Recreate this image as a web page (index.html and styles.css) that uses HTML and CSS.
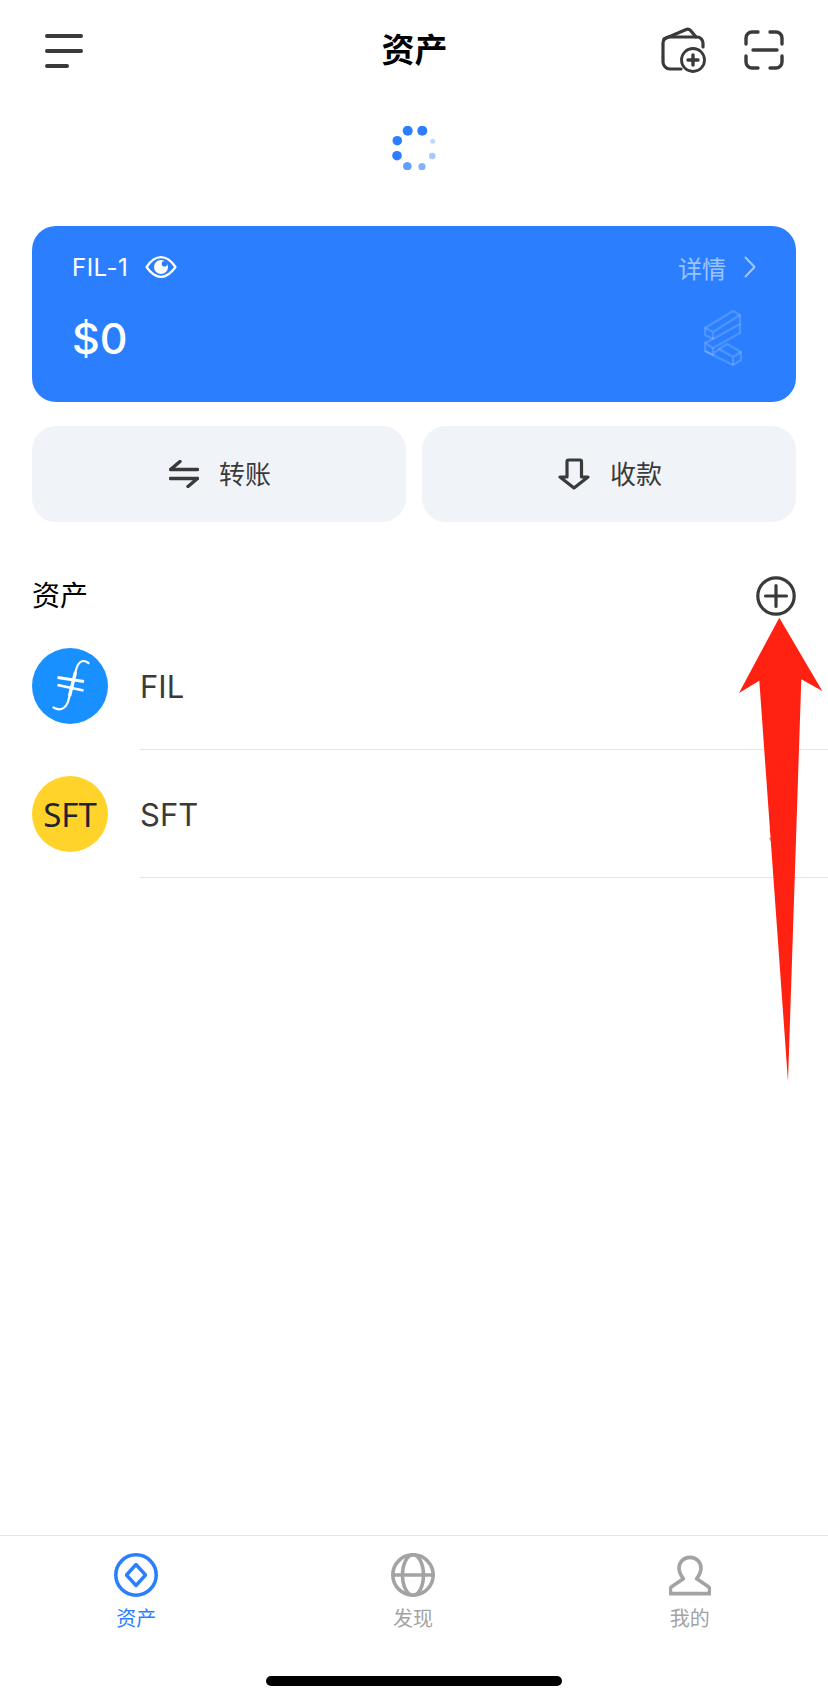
FILE: index.html
```html
<!DOCTYPE html>
<html lang="zh-CN">
<head>
    <meta charset="UTF-8">
    <meta name="viewport" content="width=device-width, initial-scale=1.0">
    <title>资产</title>
    <link rel="stylesheet" href="styles.css">
</head>
<body>
    <div class="page">
        <!-- 顶部导航 -->
        <header class="topbar">
            <div class="menu-btn">
                <span class="menu-line"></span>
                <span class="menu-line"></span>
                <span class="menu-line short"></span>
            </div>
            <h1 class="topbar-title">资产</h1>
            <div class="topbar-actions">
                <svg class="icon-wallet" width="46" height="46" viewBox="0 0 46 46" fill="none" stroke="#3a3a3a" stroke-width="3.2" stroke-linecap="round" stroke-linejoin="round">
                    <path d="M20 42H9a7 7 0 0 1-7-7V16a6 6 0 0 1 6-6H36a6 6 0 0 1 6 6v4"/>
                    <path d="M3 12L24 3q4-2 6 1l5 6"/>
                    <circle cx="32" cy="33" r="11.5" stroke-width="2.8"/>
                    <path d="M32 28v10M27 33h10" stroke-width="3.4"/>
                </svg>
                <svg width="40" height="40" viewBox="0 0 40 40" fill="none" stroke="#3a3a3a" stroke-width="3.4" stroke-linecap="round">
                    <path d="M14 2H8a6 6 0 0 0-6 6v6"/>
                    <path d="M26 2h6a6 6 0 0 1 6 6v6"/>
                    <path d="M14 38H8a6 6 0 0 1-6-6v-6"/>
                    <path d="M26 38h6a6 6 0 0 0 6-6v-6"/>
                    <path d="M9 20H33"/>
                </svg>
            </div>
        </header>

        <!-- 加载动画 -->
        <div class="spinner">
            <svg width="46" height="44" viewBox="391 126 46 44" fill="#2b7fff">
                <circle cx="407.7" cy="130.7" r="5"/>
                <circle cx="422.3" cy="130.7" r="5"/>
                <circle cx="432.7" cy="141.3" r="2.5" opacity="0.3"/>
                <circle cx="432.3" cy="156" r="3.3" opacity="0.42"/>
                <circle cx="422" cy="166.7" r="3.6" opacity="0.6"/>
                <circle cx="407.3" cy="166.3" r="4.3" opacity="0.75"/>
                <circle cx="397" cy="155.7" r="4.8"/>
                <circle cx="397.3" cy="140.7" r="4.8"/>
            </svg>
        </div>

        <main class="content">
            <!-- 钱包卡片 -->
            <section class="wallet-card">
                <div class="wallet-top">
                    <div class="wallet-name">
                        <span>FIL-1</span>
                        <svg width="32" height="22" viewBox="0 0 32 22">
                            <path d="M1.5 11C6 4.5 11 1.2 16 1.2S26 4.5 30.5 11C26 17.5 21 20.8 16 20.8S6 17.5 1.5 11Z" fill="none" stroke="#fff" stroke-width="2.2" stroke-linejoin="round"/>
                            <circle cx="16" cy="11" r="7" fill="#fff"/>
                            <circle cx="19.5" cy="7.8" r="2.8" fill="#2b7fff"/>
                        </svg>
                    </div>
                    <div class="wallet-detail">
                        <span>详情</span>
                        <svg width="12" height="22" viewBox="0 0 12 22" fill="none" stroke="#fff" stroke-opacity="0.55" stroke-width="2" stroke-linecap="round" stroke-linejoin="round">
                            <path d="M1.5 1.5L10.5 11L1.5 20.5"/>
                        </svg>
                    </div>
                </div>
                <div class="wallet-bottom">
                    <div class="wallet-balance">$0</div>
                    <svg class="wallet-mark" width="38" height="56" viewBox="10 10 38 56" fill="none" stroke="#fff" stroke-opacity="0.17" stroke-width="2.2" stroke-linejoin="round">
                        <path d="M11 28L39 11L46 15V24L19 39L11 35Z"/>
                        <path d="M11 28L19 32L46 15M19 32V39"/>
                        <path d="M46 24V33L19 48L11 43V51L39 65L47 60V52L33 44L25 49"/>
                        <path d="M11 43L19 39M19 48V55L11 51M39 65V57L47 52M39 57L25 49L19 54"/>
                    </svg>
                </div>
            </section>

            <!-- 转账 / 收款 -->
            <div class="actions">
                <div class="action-btn">
                    <svg width="30" height="28" viewBox="0 0 30 28" fill="none" stroke="#3a3a3a" stroke-width="3.4" stroke-linecap="round">
                        <path d="M1.5 9.5H28.5M1.5 9.5L11 1.5"/>
                        <path d="M1.5 18.5H28.5M28.5 18.5L19 26.5"/>
                    </svg>
                    <span class="action-label">转账</span>
                </div>
                <div class="action-btn">
                    <svg width="32" height="32" viewBox="0 0 32 32" fill="none" stroke="#3a3a3a" stroke-width="3.2" stroke-linejoin="round">
                        <path d="M9 19V3.5A1.5 1.5 0 0 1 10.5 2H22a1.5 1.5 0 0 1 1.5 1.5V19H30L16 30L2 19Z"/>
                    </svg>
                    <span class="action-label">收款</span>
                </div>
            </div>

            <div class="section-head">
                <h2 class="section-title">资产</h2>
                <svg width="40" height="40" viewBox="0 0 40 40" fill="none" stroke="#3a3a3a" stroke-width="3.2" stroke-linecap="round">
                    <circle cx="20" cy="20" r="18.2"/>
                    <path d="M20 9.5V30.5M9.5 20H30.5"/>
                </svg>
            </div>
        </main>

        <!-- 资产列表 -->
        <ul class="coin-list">
            <li class="coin-row">
                <svg class="coin-icon" width="76" height="76" viewBox="0 0 76 76" fill="none">
                    <circle cx="38" cy="38" r="38" fill="#1890ff"/>
                    <path d="M56.5 15C50.5 10.5 46 14 44 22L37 50C35 60 29 64 21.5 59.5" stroke="#fff" stroke-width="2.2" stroke-linecap="round"/>
                    <path d="M43.5 24L37.5 48" stroke="#fff" stroke-width="3.4"/>
                    <path d="M25.5 29.5L52 33.5M25.5 37L51.5 42.5" stroke="#fff" stroke-width="2.8"/>
                </svg>
                <div class="coin-body">
                    <span class="coin-name">FIL</span>
                    <div class="coin-amount">
                        <span class="coin-qty">0</span>
                        <span class="coin-fiat">$0</span>
                    </div>
                </div>
            </li>
            <li class="coin-row">
                <div class="coin-icon coin-sft">SFT</div>
                <div class="coin-body">
                    <span class="coin-name">SFT</span>
                    <div class="coin-amount">
                        <span class="coin-qty">0</span>
                        <span class="coin-fiat">$0</span>
                    </div>
                </div>
            </li>
        </ul>

        <!-- 底部标签栏 -->
        <footer class="tabbar-wrap">
            <nav class="tabbar">
                <div class="tab active">
                    <svg width="46" height="44" viewBox="0 0 46 44" fill="none" stroke="#2b7fff" stroke-width="3.6" stroke-linejoin="round">
                        <circle cx="23" cy="22" r="20.2"/>
                        <path d="M23 11.5L32.5 22L23 32.5L13.5 22Z" stroke-width="3.4"/>
                    </svg>
                    <span>资产</span>
                </div>
                <div class="tab">
                    <svg width="46" height="44" viewBox="0 0 46 44" fill="none" stroke="#a3a3a3" stroke-width="3.6">
                        <circle cx="23" cy="22" r="20.2"/>
                        <ellipse cx="23" cy="22" rx="10.5" ry="20.2"/>
                        <path d="M3 22H43"/>
                    </svg>
                    <span>发现</span>
                </div>
                <div class="tab">
                    <svg width="42" height="44" viewBox="0 0 44 44" fill="none" stroke="#a3a3a3" stroke-width="3.8" stroke-linejoin="round">
                        <path d="M22 3.5C14.5 3.5 10.5 9 10.5 15C10.5 20 13 23 15 26L3 34Q1.5 35 1.5 37V41.5H42.5V37Q42.5 35 41 34L29 26C31 23 33.5 20 33.5 15C33.5 9 29.5 3.5 22 3.5Z"/>
                    </svg>
                    <span>我的</span>
                </div>
            </nav>
            <div class="home-bar"></div>
        </footer>

        <!-- 标注箭头 -->
        <svg class="callout-arrow" width="93" height="470" viewBox="735 615 93 470">
            <polygon points="779.3,617.7 822.3,691 801.3,679.3 788,1081.6 759.3,680.7 739,693" fill="#ff2112"/>
        </svg>
    </div>
</body>
</html>
```

FILE: styles.css
```css
* {
    box-sizing: border-box;
}
body {
    margin: 0;
    background-color: #fff;
    font-family: Inter, "Noto Sans CJK SC", sans-serif;
    color: #3a3a3a;
}
.page {
    position: relative;
    width: 828px;
    height: 1699px;
    display: flex;
    flex-direction: column;
    overflow: hidden;
}
svg {
    display: block;
    flex-shrink: 0;
}

/* top bar */
.topbar {
    height: 100px;
    padding: 0 44px 0 45px;
    display: grid;
    grid-template-columns: 1fr auto 1fr;
    align-items: center;
}
.menu-btn {
    margin-top: 2px;
    display: flex;
    flex-direction: column;
    gap: 11.5px;
}
.menu-line {
    width: 38px;
    height: 3.5px;
    border-radius: 2px;
    background-color: #3a3a3a;
}
.menu-line.short {
    width: 24px;
}
.topbar-title {
    margin: 0 0 4px;
    font-size: 33px;
    font-weight: 700;
    color: #000;
}
.topbar-actions {
    display: flex;
    justify-content: flex-end;
    align-items: center;
    gap: 37px;
}

.spinner {
    margin-top: 26px;
    margin-bottom: 56px;
    height: 44px;
    display: flex;
    justify-content: center;
}

.content {
    padding: 0 32px;
}

/* wallet card */
.wallet-card {
    height: 176px;
    padding: 22px 40px 0 40px;
    border-radius: 24px;
    background-color: #2b7fff;
    color: #fff;
}
.wallet-top {
    height: 38px;
    display: flex;
    justify-content: space-between;
    align-items: center;
}
.wallet-name {
    display: flex;
    align-items: center;
    gap: 17px;
    font-size: 24px;
    letter-spacing: 0.5px;
}
.wallet-detail {
    display: flex;
    align-items: center;
    gap: 18px;
    font-size: 24px;
    color: rgba(255, 255, 255, 0.55);
}
.wallet-bottom {
    margin-top: 23px;
    height: 58px;
    display: flex;
    justify-content: space-between;
    align-items: center;
}
.wallet-balance {
    font-size: 43px;
    font-weight: 500;
}
.wallet-mark {
    margin-right: 14px;
}

/* buttons */
.actions {
    margin-top: 24px;
    display: flex;
    gap: 16px;
}
.action-btn {
    flex: 1;
    height: 96px;
    padding-left: 2px;
    border-radius: 24px;
    background-color: #f0f4f8;
    display: flex;
    justify-content: center;
    align-items: center;
    gap: 20px;
    font-size: 26px;
}
.action-label {
    margin-bottom: 4px;
}

.section-head {
    margin-top: 54px;
    height: 40px;
    display: flex;
    justify-content: space-between;
    align-items: center;
}
.section-title {
    margin: 0 0 4px;
    font-size: 28px;
    font-weight: 400;
    color: #000;
}

/* coin list */
.coin-list {
    list-style: none;
    margin: 6px 0 0;
    padding: 0;
}
.coin-row {
    display: flex;
    align-items: center;
    padding-left: 32px;
}
.coin-icon {
    width: 76px;
    height: 76px;
    flex-shrink: 0;
}
.coin-sft {
    border-radius: 50%;
    background-color: #ffd32a;
    color: #1f2433;
    font-family: "Noto Sans", sans-serif;
    font-size: 33px;
    display: flex;
    justify-content: center;
    align-items: center;
}
.coin-body {
    flex: 1;
    margin-left: 32px;
    padding-right: 32px;
    height: 128px;
    border-bottom: 1px solid #e5e5e5;
    display: flex;
    justify-content: space-between;
    align-items: center;
}
.coin-name {
    font-size: 31px;
    margin-top: 1px;
}
.coin-amount {
    display: flex;
    flex-direction: column;
    align-items: flex-end;
    gap: 4px;
}
.coin-qty {
    font-size: 30px;
    line-height: 36px;
}
.coin-fiat {
    font-size: 22px;
    line-height: 26px;
    color: #a0a4ac;
}

/* tab bar */
.tabbar-wrap {
    margin-top: auto;
}
.tabbar {
    width: 830px;
    margin-left: -2px;
    padding-top: 17px;
    border-top: 1px solid #e5e5e5;
    display: flex;
}
.tab {
    flex: 1;
    display: flex;
    flex-direction: column;
    align-items: center;
    gap: 8px;
    font-size: 20px;
    line-height: 28px;
    color: #a3a3a3;
}
.tab.active {
    color: #2b7fff;
}
.home-bar {
    width: 296px;
    height: 10px;
    margin: 43px auto 13px;
    border-radius: 5px;
    background-color: #000;
}

/* annotation drawn over the screenshot */
.callout-arrow {
    position: absolute;
    left: 735px;
    top: 615px;
}
```
